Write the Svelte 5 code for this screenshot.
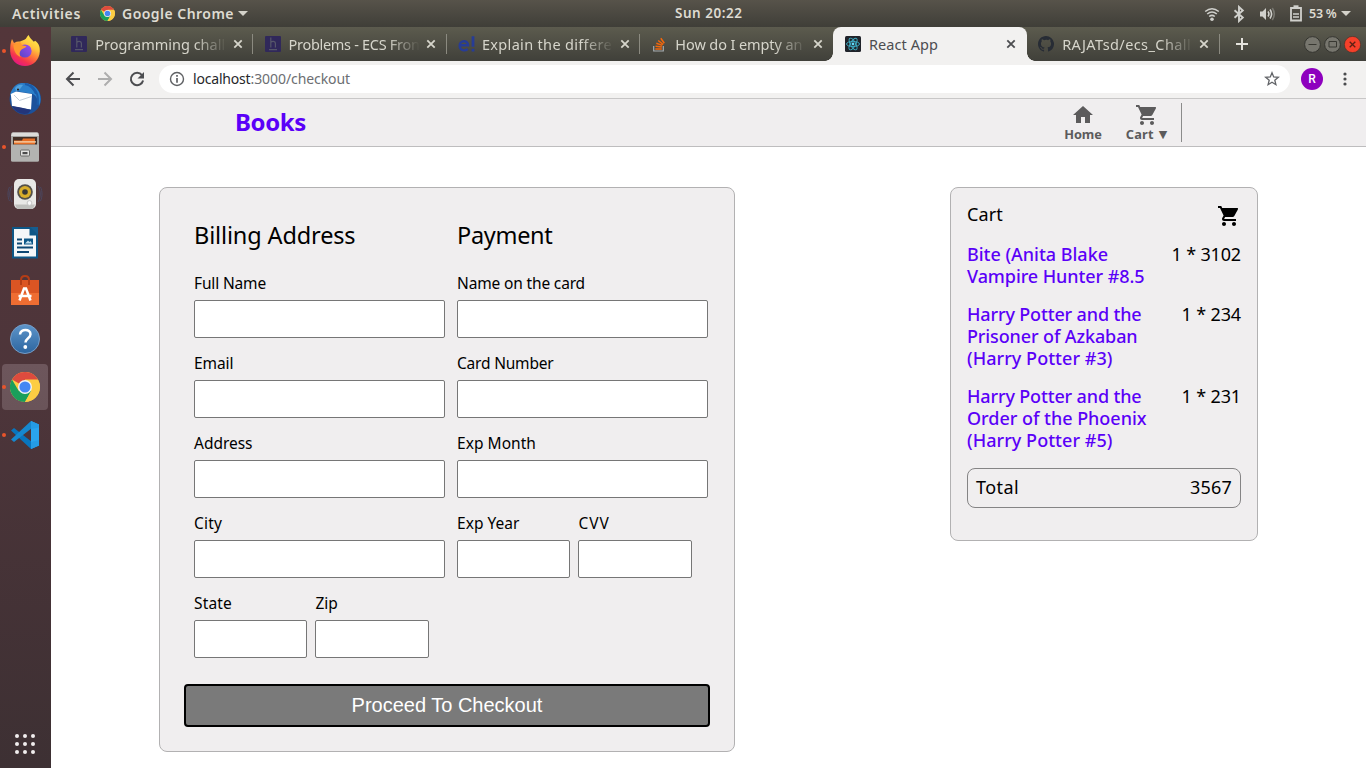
<script>
  const tabs = [
    { icon: 'h', title: 'Programming chall', w: 130 },
    { icon: 'h', title: 'Problems - ECS Fron', w: 131 },
    { icon: 'e', title: 'Explain the differe', w: 130 },
    { icon: 'so', title: 'How do I empty an', w: 127 },
    { icon: 'react', title: 'React App', w: 69, active: true },
    { icon: 'git', title: 'RAJATsd/ecs_Chall', w: 129 }
  ];
  const dock = [
    { name: 'firefox', running: true },
    { name: 'mail' },
    { name: 'files', running: true },
    { name: 'music' },
    { name: 'writer' },
    { name: 'store' },
    { name: 'help' },
    { name: 'chrome', running: true, active: true },
    { name: 'code', running: true }
  ];
  const columns = [
    {
      title: 'Billing Address', w: 161.5,
      fields: [
        { label: 'Full Name', w: 72 },
        { label: 'Email', w: 39.5 },
        { label: 'Address', w: 58.5 },
        { label: 'City', w: 28 }
      ],
      small: [{ label: 'State', w: 38 }, { label: 'Zip', w: 22.5 }]
    },
    {
      title: 'Payment', w: 95.5,
      fields: [
        { label: 'Name on the card', w: 128 },
        { label: 'Card Number', w: 96.5 },
        { label: 'Exp Month', w: 79 }
      ],
      small: [{ label: 'Exp Year', w: 62.5 }, { label: 'CVV', w: 31.5 }]
    }
  ];
  const items = [
    {
      lines: [['Bite (Anita Blake', 141], ['Vampire Hunter #8.5', 177.5]],
      price: '1 * 3102', w: 69.5
    },
    {
      lines: [['Harry Potter and the', 174.5], ['Prisoner of Azkaban', 170.5], ['(Harry Potter #3)', 145.5]],
      price: '1 * 234', w: 59.5
    },
    {
      lines: [['Harry Potter and the', 174.5], ['Order of the Phoenix', 179.5], ['(Harry Potter #5)', 145.5]],
      price: '1 * 231', w: 59.5
    }
  ];
  const petals = [0, 60, 120];

  // Tracks a line of text out to a given width.
  function fit(node, width) {
    const natural = node.getBoundingClientRect().width;
    const count = node.textContent.length;
    node.style.letterSpacing = `${(width - natural) / count}px`;
  }
</script>

{#snippet cartIcon(size)}
  <svg width={size} height={size} viewBox="0 0 24 24" fill="currentColor">
    <path d="M7 18c-1.1 0-1.99.9-1.99 2S5.9 22 7 22s2-.9 2-2-.9-2-2-2zM1 2v2h2l3.6 7.59-1.35 2.45c-.16.28-.25.61-.25.96 0 1.1.9 2 2 2h12v-2H7.42c-.14 0-.25-.11-.25-.25l.03-.12.9-1.63h7.45c.75 0 1.41-.41 1.75-1.03l3.58-6.49A1 1 0 0 0 20 4H5.21l-.94-2H1zm16 16c-1.1 0-1.99.9-1.99 2s.89 2 1.99 2 2-.9 2-2-.9-2-2-2z" />
  </svg>
{/snippet}

{#snippet chromeIcon(size)}
  <svg width={size} height={size} viewBox="0 0 30 30">
    <circle cx="15" cy="15" r="15" fill="#fccd43" />
    <path d="M15 15 2 7.5A15 15 0 0 1 28 7.5H15z" fill="#dd4b3e" />
    <path d="M2 7.5A15 15 0 0 0 15 30l6.4-11.2-6.4-3.8-6.4 3.8z" fill="#1a9f5b" />
    <path d="M15 8.2h13.3A15 15 0 0 1 15 30l6.2-11.2z" fill="#fccd43" />
    <circle cx="15" cy="15" r="7" fill="#f4f4f4" />
    <circle cx="15" cy="15" r="5.6" fill="#4587f3" />
  </svg>
{/snippet}

{#snippet closeX()}
  <svg class="x" width="10" height="10" viewBox="0 0 10 10"><path d="M1.3 1.3l7.4 7.4M8.7 1.3 1.3 8.7" stroke="currentColor" stroke-width="1.8" fill="none" /></svg>
{/snippet}

{#snippet favicon(kind)}
  <svg class="fav" width="18" height="16" viewBox="0 0 18 16">
    {#if kind === 'h'}
      <rect width="16" height="16" rx="1" fill="#30285a" />
      <path d="M5.8 1.5v10M5.8 6.5c1-1.6 4.6-1.8 4.6.8v4.2M4 13.7h8" stroke="#56566a" stroke-width="1.2" fill="none" />
    {:else if kind === 'e'}
      <path d="M1.5 9.300h8.600C9.900 3.600 1.700 4 1.700 9.500c0 5.500 5.500 5.700 8 3.500" stroke="#273c96" stroke-width="2.4" fill="none" />
      <path d="M15 .3v10.500M15 12.700v2.900" stroke="#273c96" stroke-width="2.8" />
    {:else if kind === 'so'}
      <path d="M2.7 10v5h9.600v-5" stroke="#a5abb0" stroke-width="1.2" fill="none" />
      <path d="M4.300 12.900h6.500M4.500 10.200l6.400.8M5.300 7.200l6 2.200M7.200 4.500l5 4M9.800 2.200l3.500 5" stroke="#f4670b" stroke-width="1.5" />
    {:else if kind === 'react'}
      <rect width="16" height="16" rx="1.5" fill="#20232a" />
      {#each petals as a}
        <ellipse cx="8" cy="8" rx="6.5" ry="2.6" transform="rotate({a} 8 8)" fill="none" stroke="#3fb0c8" stroke-width=".9" />
      {/each}
      <circle cx="8" cy="8" r="1.4" fill="#61dafb" />
    {:else}
      <path fill="#272c35" d="M8 0C3.580 0 0 3.580 0 8c0 3.540 2.290 6.530 5.470 7.590.4.070.550-.170.550-.380v-1.490c-2.010.370-2.530-.490-2.690-.940-.090-.230-.480-.940-.820-1.130-.280-.150-.680-.520-.010-.530.630-.010 1.080.580 1.230.820.720 1.210 1.870.870 2.330.660.070-.520.280-.870.510-1.070-1.780-.2-3.640-.890-3.640-3.950 0-.870.310-1.590.820-2.150-.080-.2-.360-1.020.080-2.120 0 0 .670-.210 2.200.820A7.400 7.400 0 0 1 8 3.870c.680 0 1.360.090 2 .260 1.530-1.040 2.200-.820 2.200-.820.440 1.100.160 1.920.080 2.120.510.560.820 1.270.820 2.150 0 3.070-1.870 3.750-3.650 3.950.290.250.540.730.540 1.480v2.200c0 .210.150.460.550.380A8 8 0 0 0 8 0z" />
    {/if}
  </svg>
{/snippet}

{#snippet dockIcon(name)}
  <svg width="51" height="48" viewBox="0 0 51 48">
    {#if name === 'firefox'}
      <path d="M12 12l2 4c2-1.200 4-1.600 6-1.400 1.500-1 3.500-1 4.800-2 1.700-1.200 2-2.800 3.800-4.600 1 3.300 3.500 4.300 5.200 6.800l1.400-1C39.500 17 40 21 39.800 24.500 39.500 33 33 39 25 39s-14.500-6-14.800-14.500C10 19.500 10.500 15.500 12 12z" fill="url(#fox)" />
      <circle cx="25" cy="24" r="6.6" fill="url(#fog)" />
      <path d="M13.500 18l6.500-3 2 3.300 4.500 1c-1 2.200-4 2-5.500 3.700-2 2.200-1.500 5-.5 7-4-1.500-7-6-7-12z" fill="#ff9a2e" />
    {:else if name === 'mail'}
      <circle cx="25.3" cy="24" r="15.7" fill="#1b519b" />
      <path d="M10 20C12 12 17 8 22 8c8 0 14 3 17 9 2 5 2 10 0 14-1-8-4-12-8-12.500L16 16z" fill="#2a7fca" />
      <path d="M30 10c6 4 9 11 7.500 20M25 9c5 1 9 5 11 10" stroke="#1a5ba9" stroke-width="2" fill="none" />
      <path d="M15 13c2-3 5-4 8-3l-3 4-4 2z" fill="#51a2dd" />
      <path d="M10.800 19l5.200-2.500 16 2.500-1 15.500-10-1.500-9-2z" fill="#fff" />
      <path d="M14 20l5.500 5.500 12-4" stroke="#c3ced8" fill="none" />
      <path d="M12 31l9 1.500 10 2.500-3 3.500c-6 1.500-12.500-1-16-7.500z" fill="#23357a" />
      <circle cx="18" cy="14.5" r="1" fill="#231815" />
    {:else if name === 'files'}
      <rect x="11" y="9.5" width="28" height="29" rx="1.5" fill="#a5a5a3" />
      <path d="M12.500 9.500h25L39 13H11z" fill="#dcdcda" />
      <rect x="13" y="14" width="24" height="8" fill="#422f26" />
      <path d="M14 17.500h8l1-2h12v6H14z" fill="#e66d25" />
      <path d="M14 18.300h22v1.200H14z" fill="#fae0bd" />
      <path d="M11 21.500h28V37a1.500 1.500 0 0 1-1.500 1.500h-25A1.500 1.500 0 0 1 11 37z" fill="#b3b3b1" />
      <rect x="20.5" y="27" width="9" height="6" rx="1" fill="#e2e2e0" stroke="#686866" />
      <rect x="22.5" y="29" width="5" height="2.200" fill="#4b4b4b" />
    {:else if name === 'music'}
      <path d="M12 15c-3 5-3 11 0 16M38 15c3 5 3 11 0 16M9.500 16c-2 4-2 10 0 14M40.500 16c2 4 2 10 0 14" stroke="#4b4760" fill="none" />
      <rect x="14" y="8" width="22" height="30" rx="5" fill="#e8e8e6" />
      <path d="M15 33.500h20l-2 4.500H17z" fill="#bfc0bd" />
      <circle cx="25" cy="21" r="7.8" fill="#53504a" />
      <circle cx="25" cy="21" r="6" fill="#d8ad2b" />
      <circle cx="25" cy="21" r="2.8" fill="#373737" />
      <circle cx="29.5" cy="32" r="2.4" fill="#f8f8f8" stroke="#c5c5c5" />
    {:else if name === 'writer'}
      <path d="M12 8h18.500L38 15.500V39.500H12z" fill="#0d5787" />
      <path d="M14 10h15.500v6.500H36v21H14z" fill="#f4f7f9" />
      <path d="M30 8h8v8z" fill="#145d90" />
      <path d="M17 20.500h5M17 24.500h5M17 28.500h16M17 33h12" stroke="#0d4874" stroke-width="1.9" />
      <rect x="24" y="19.5" width="9" height="6" fill="#0d5787" />
      <path d="M25 24.500l3-3 1.500 1.500 1-1 1.500 2.500z" fill="#c0deef" />
    {:else if name === 'store'}
      <path d="M11 13h28v13H11z" fill="#db5523" />
      <path d="M11 26h28v12H11z" fill="#ef6d32" />
      <path d="M21 18v-5q0-4 4-4t4 4v5" fill="none" stroke="#b43d16" stroke-width="2" />
      <path d="M19.500 33.500 24 21.500h2l4.500 12M18.500 29h13" fill="none" stroke="#fff" stroke-width="2.5" />
    {:else if name === 'help'}
      <circle cx="25" cy="24" r="14.5" fill="url(#help)" stroke="#769dc7" />
      <path d="M20 19.500c.5-6 10.500-6 10.500-.3 0 4-5 4-5 8.300" fill="none" stroke="#fff" stroke-width="2.5" />
      <circle cx="25.3" cy="32" r="1.9" fill="#fff" />
    {:else if name === 'chrome'}
      <g transform="translate(10 9)">{@render chromeIcon(30)}</g>
    {:else}
      <path d="M11 19.500l3-2.500 18 14-1 7z" fill="#0875bd" />
      <path d="M11 28.500l3 2.500L32 17l-1-7z" fill="#1688ce" />
      <path d="M31 10l8 3.500v21L31 38z" fill="#2aa5ef" />
      <path d="M31 10l8 3.500v3L31 18zM31 31l8-2v5.500L31 38z" fill="#259be4" />
    {/if}
  </svg>
{/snippet}

{#snippet field(f, small)}
  <label class="field" class:small>
    <span class="line"><span use:fit={f.w}>{f.label}</span></span>
    <input type="text" />
  </label>
{/snippet}

<div class="screen">
  <header class="panel">
    <span class="act"><span use:fit={69}>Activities</span></span>
    <span class="app">{@render chromeIcon(15)}<span class="appname"><span use:fit={112}>Google Chrome</span></span><i class="caret"></i></span>
    <span class="clock"><span use:fit={67.5}>Sun 20:22</span></span>
    <span class="tray">
      <svg width="16" height="16" viewBox="0 0 16 16" fill="none" stroke="#d0d0cc" stroke-width="1.6"><path d="M1.200 5.500q6.800-5.500 13.600 0M3.200 8q4.800-4 9.600 0M5.200 10.500q2.800-2.300 5.600 0" /><circle cx="8" cy="13.2" r="1.8" fill="#d0d0cc" stroke="none" /></svg>
      <svg width="12" height="18" viewBox="0 0 12 18" fill="none" stroke="#d0d0cc" stroke-width="1.9"><path d="M1.500 5.200l8.300 7.300L6 16V2l3.800 3.500L1.500 12.800" /></svg>
      <svg width="18" height="14" viewBox="0 0 18 14" fill="none" stroke="#d0d0cc" stroke-width="1.6"><path d="M1 4.500h2.500L7 1v12L3.500 9.500H1z" fill="#d0d0cc" stroke="none" /><path d="M9 4.500q1.800 2.500 0 5M11 2.500q3.200 4.500 0 9" /><path d="M13.300 1q4 6 0 12" stroke="#77766f" /></svg>
      <svg width="12" height="17" viewBox="0 0 12 17" fill="none" stroke="#d0d0cc" stroke-width="1.8"><path d="M1 3h10v12.500H1z" /><path d="M3.500 1.300h5" stroke-width="2" /><path d="M3 9h6M3 12h6" stroke-width="1.6" /></svg>
      <span class="pct"><span use:fit={27.5}>53 %</span></span><i class="caret"></i>
    </span>
  </header>

  <div class="desktop">
    <nav class="dock">
      <svg width="0" height="0" class="defs">
        <defs>
          <linearGradient id="fox" x1=".85" y1="0" x2=".3" y2="1"><stop offset="0" stop-color="#fff44f" /><stop offset=".35" stop-color="#ffc43c" /><stop offset=".6" stop-color="#ff7139" /><stop offset=".8" stop-color="#f5334f" /><stop offset="1" stop-color="#e31587" /></linearGradient>
          <linearGradient id="fog" x1="1" y1="0" x2="0" y2="1"><stop offset="0" stop-color="#a14bf0" /><stop offset="1" stop-color="#5346c4" /></linearGradient>
          <linearGradient id="help" x1="0" y1="0" x2="0" y2="1"><stop offset="0" stop-color="#5d95ca" /><stop offset="1" stop-color="#2d659f" /></linearGradient>
        </defs>
      </svg>
      {#each dock as d}
        <div class="launcher" class:active={d.active}>
          {@render dockIcon(d.name)}
          {#if d.running}<i class="dot"></i>{/if}
        </div>
      {/each}
      <div class="apps">{#each Array(9) as _}<i></i>{/each}</div>
    </nav>

    <section class="browser">
      <div class="strip">
        {#each tabs as t, i}
          <div class="tab" class:active={t.active} class:nosep={i === 3}>
            {@render favicon(t.icon)}
            <span class="title" class:fade={!t.active}><span use:fit={t.w}>{t.title}</span></span>
            {@render closeX()}
          </div>
        {/each}
        <svg class="plus" width="12" height="12" viewBox="0 0 12 12"><path d="M6 0v12M0 6h12" stroke="#e4e3dd" stroke-width="2" /></svg>
        <div class="wm">
          <svg width="17" height="17" viewBox="0 0 17 17"><circle cx="8.5" cy="8.5" r="7.9" fill="#77766e" stroke="#353530" /><path d="M4.500 8.500h8" stroke="#383832" /></svg>
          <svg width="17" height="17" viewBox="0 0 17 17"><circle cx="8.5" cy="8.5" r="7.9" fill="#77766e" stroke="#353530" /><path d="M5 5.500h7.500v5.500H5z" stroke="#383832" fill="none" /></svg>
          <svg width="17" height="17" viewBox="0 0 17 17"><circle cx="8.5" cy="8.5" r="8.1" fill="#f5402a" stroke="#4a2f25" stroke-width=".6" /><path d="M5.700 5.700l5.600 5.600M11.300 5.700l-5.600 5.600" stroke="#5a2013" stroke-width="1.3" /></svg>
        </div>
      </div>

      <div class="toolbar">
        <svg width="16" height="16" viewBox="0 0 16 16" fill="none" stroke="#4c4d50" stroke-width="2"><path d="M15 8H2M8.500 1.500 2 8l6.500 6.500" /></svg>
        <svg width="16" height="16" viewBox="0 0 16 16" fill="none" stroke="#aeaeae" stroke-width="2"><path d="M1 8h13M7.500 1.500 14 8l-6.500 6.500" /></svg>
        <svg width="16" height="16" viewBox="0 0 16 16" fill="none" stroke="#4c4d50" stroke-width="2"><path d="M13 4.200A6.200 6.200 0 1 0 14.100 9.500" /><path d="M15 1v6.500H8.500z" fill="#4c4d50" stroke="none" /></svg>
        <div class="omni">
          <svg width="16" height="16" viewBox="0 0 16 16" fill="none" stroke="#5f6164" stroke-width="1.4"><circle cx="8" cy="8" r="6.5" /><path d="M8 7v4.700M8 4v1.700" stroke-width="1.7" /></svg>
          <span class="url"><b use:fit={57.5}>localhost</b><span use:fit={99.5}>:3000/checkout</span></span>
          <svg class="star" width="16" height="16" viewBox="0 0 16 16" fill="none" stroke="#616367" stroke-width="1.3"><path d="M8 1.800l1.700 4.200 4.600.3-3.500 2.900 1.100 4.500L8 11.200l-3.900 2.500 1.100-4.500L1.700 6.300 6.300 6z" /></svg>
        </div>
        <span class="avatar">R</span>
        <svg class="kebab" width="4" height="14" viewBox="0 0 4 14" fill="#4a4b4d"><circle cx="2" cy="2" r="1.6" /><circle cx="2" cy="7" r="1.6" /><circle cx="2" cy="12" r="1.6" /></svg>
      </div>

      <header class="site">
        <h1><span use:fit={71}>Books</span></h1>
        <div class="links">
          <span class="link home">
            <svg width="24" height="24" viewBox="0 0 24 24" fill="currentColor"><path d="M10 20v-6h4v6h5v-8h3L12 3 2 12h3v8z" /></svg>
            <span class="cap"><span use:fit={37.5}>Home</span></span>
          </span>
          <span class="link cartlink">
            {@render cartIcon(24)}
            <span class="cap"><span use:fit={28}>Cart</span><i>▼</i></span>
          </span>
        </div>
      </header>

      <main>
        <form class="card checkout">
          <div class="cols">
            {#each columns as c}
              <div class="col">
                <h2><span use:fit={c.w}>{c.title}</span></h2>
                {#each c.fields as f}{@render field(f, false)}{/each}
                <div class="pair">{#each c.small as f}{@render field(f, true)}{/each}</div>
              </div>
            {/each}
          </div>
          <button type="button">Proceed To Checkout</button>
        </form>

        <aside class="card cart">
          <div class="head"><span class="line"><span use:fit={36}>Cart</span></span>{@render cartIcon(24)}</div>
          {#each items as it}
            <div class="item">
              <div class="book">{#each it.lines as [text, w]}<span class="row"><span use:fit={w}>{text}</span></span>{/each}</div>
              <span class="row"><span use:fit={it.w}>{it.price}</span></span>
            </div>
          {/each}
          <div class="total"><span use:fit={43}>Total</span><span use:fit={42}>3567</span></div>
        </aside>
      </main>
    </section>
  </div>
</div>

<style>
  :global(body) { margin: 0; overflow: hidden; }
  .screen { width: 1366px; height: 768px; display: flex; flex-direction: column; overflow: hidden; font-family: "Noto Sans", "Open Sans", sans-serif; background: #fff; }
  .screen * { box-sizing: border-box; }
  svg { display: block; flex: none; }
  span { white-space: nowrap; }

  .panel { height: 27px; flex: none; display: flex; align-items: center; background: linear-gradient(#57534a, #3f3e38); color: #dedbd2; font-size: 14px; font-weight: 600; }
  .act { width: 100px; padding-left: 12px; }
  .app { display: flex; align-items: center; width: 575px; }
  .appname { width: 116px; margin-left: 7px; }
  .caret { border: 5px solid transparent; border-top: 5px solid #d4d2ca; border-bottom: 0; }
  .clock { width: 529px; font-size: 13.5px; line-height: 24px; margin-bottom: 2px; }
  .tray { display: flex; align-items: center; }
  .tray svg:nth-child(2) { margin-left: 13px; }
  .tray svg:nth-child(3) { margin-left: 14px; }
  .tray svg:nth-child(4) { margin-left: 13px; }
  .pct { width: 32px; margin-left: 7px; font-size: 12.5px; }

  .desktop { flex: 1; display: flex; min-height: 0; }
  .dock { width: 51px; flex: none; display: flex; flex-direction: column; background: linear-gradient(#53363a, #4d353a 50%, #3d3033); }
  .defs { position: absolute; }
  .launcher { position: relative; height: 48px; }
  .launcher.active { background: linear-gradient(#6d565c, #6a5459) 2px 1px / 46px 46px no-repeat; clip-path: inset(1px 3px 1px 2px round 4px); }
  .dot { position: absolute; left: 2px; top: 22px; width: 4px; height: 4px; border-radius: 2px; background: #e9542b; }
  .apps { margin: auto 0 14px 15px; display: grid; grid-template-columns: repeat(3, 4px); gap: 4px; }
  .apps i { width: 4px; height: 4px; border-radius: 2px; background: #f1eeee; }

  .browser { flex: 1; min-width: 0; display: flex; flex-direction: column; }
  .strip { height: 34px; flex: none; display: flex; align-items: center; padding-left: 9px; background: linear-gradient(#5c5b4e, #40403a); }
  .tab { position: relative; width: 193.4px; height: 34px; flex: none; display: flex; align-items: center; padding: 0 10.3px 0 11.2px; color: #d6d5cb; font-size: 14.5px; }
  .tab::after { content: ""; position: absolute; right: 0; top: 7px; width: 1px; height: 20px; background: #8b8a80; }
  .tab.active::after, .tab.nosep::after { display: none; }
  .tab.active { background: #f2f1f0; color: #4c4d50; border-radius: 8px 8px 0 0; margin-left: -.6px; width: 194px; padding-left: 12px; }
  .tab.active::before { content: ""; position: absolute; left: -8px; right: -8px; bottom: 0; height: 8px; background: radial-gradient(circle at 0 0, transparent 7.5px, #f2f1f0 8px) 0 0 / 8px 8px no-repeat, radial-gradient(circle at 100% 0, transparent 7.5px, #f2f1f0 8px) 100% 0 / 8px 8px no-repeat; }
  .title { width: 132px; margin-left: 6px; overflow: hidden; line-height: 22px; }
  .title.fade { mask-image: linear-gradient(90deg, #000 75%, transparent); }
  .x { margin-left: 6px; }
  .tab:nth-child(n + 5) .x { margin-left: 5px; }
  .plus { margin-left: 16px; }
  .wm { margin-left: auto; padding-right: 5px; display: flex; gap: 3px; }

  .toolbar { height: 38px; flex: none; display: flex; align-items: center; padding: 0 19px 2px 14px; background: #f2f1f0; border-bottom: 1px solid #c8c7c7; }
  .toolbar > svg + svg { margin-left: 16px; }
  .omni { width: 1131px; height: 28px; margin-left: 14px; padding: 0 10px; display: flex; align-items: center; background: #fff; border-radius: 14px; }
  .url { margin-left: 8px; font-size: 14px; color: #6c6e72; }
  .url b { font-weight: 400; color: #26272a; }
  .star { margin-left: auto; }
  .avatar { width: 22px; height: 22px; margin-left: 11px; border-radius: 50%; background: #8e00be; color: #fff; font: 500 12px/22px Roboto, sans-serif; text-align: center; }
  .kebab { margin-left: auto; }

  .site { height: 48px; flex: none; display: flex; justify-content: space-between; background: #f0eeef; border-bottom: 1px solid #bebdbe; padding: 0 184px; }
  h1 { margin: 0; font-size: 24px; font-weight: 700; line-height: 46px; color: #5a00f8; }
  .links { display: flex; align-items: flex-start; color: #5c5b5c; height: 39px; margin-top: 4px; border-right: 1px solid #8b8b8b; font-size: 12.8px; font-weight: 700; }
  .link { display: flex; flex-direction: column; align-items: center; }
  .cap { line-height: 15px; display: flex; }
  .home { width: 38px; }
  .cartlink { margin: 0 13px 0 23px; width: 43px; }
  .cap i { font: 700 11px/16px "DejaVu Sans", sans-serif; margin-left: 5px; }

  main { flex: 1; display: flex; align-items: flex-start; justify-content: space-between; padding: 40px 108px 0; background: #fff; }
  .card { background: #f0eeef; border: 1px solid #b2b1b2; border-radius: 8px; color: #000; }
  .checkout { width: 576px; height: 565px; padding: 31px 24px 24px; display: flex; flex-direction: column; }
  .cols { display: flex; gap: 12px; padding-left: 10px; }
  .col { width: 251px; flex: none; }
  h2 { margin: 0 0 21px; font-size: 23.5px; font-weight: 400; line-height: 32px; }
  .field { display: block; height: 80px; font-size: 15.5px; line-height: 22px; }
  .line { display: block; }
  .field input { display: block; width: 100%; height: 38px; margin: 6px 0 0; border: 1px solid #767676; border-radius: 2px; background: #fff; outline: 0; }
  .pair { display: flex; gap: 8px; }
  .small { width: 113.4px; }
  button { height: 43px; margin-top: auto; border: 2px solid #000; border-radius: 4px; background: #7a7a7a; color: #fff; font: 20px "Liberation Sans", Arial, sans-serif; padding: 0; }

  .cart { width: 308px; height: 354px; padding: 15px 16px; font-size: 18px; }
  .head { display: flex; justify-content: space-between; height: 24px; line-height: 22px; margin-bottom: 16px; }
  .head svg { margin-top: 1px; }
  .item { display: flex; justify-content: space-between; margin-bottom: 16px; line-height: 22px; }
  .book { color: #5a00f8; font-weight: 500; }
  .row { display: block; height: 22px; }
  .total { height: 40px; margin-top: 17px; padding: 0 8px; display: flex; justify-content: space-between; border: 1px solid #858485; border-radius: 8px; line-height: 36px; }
</style>
